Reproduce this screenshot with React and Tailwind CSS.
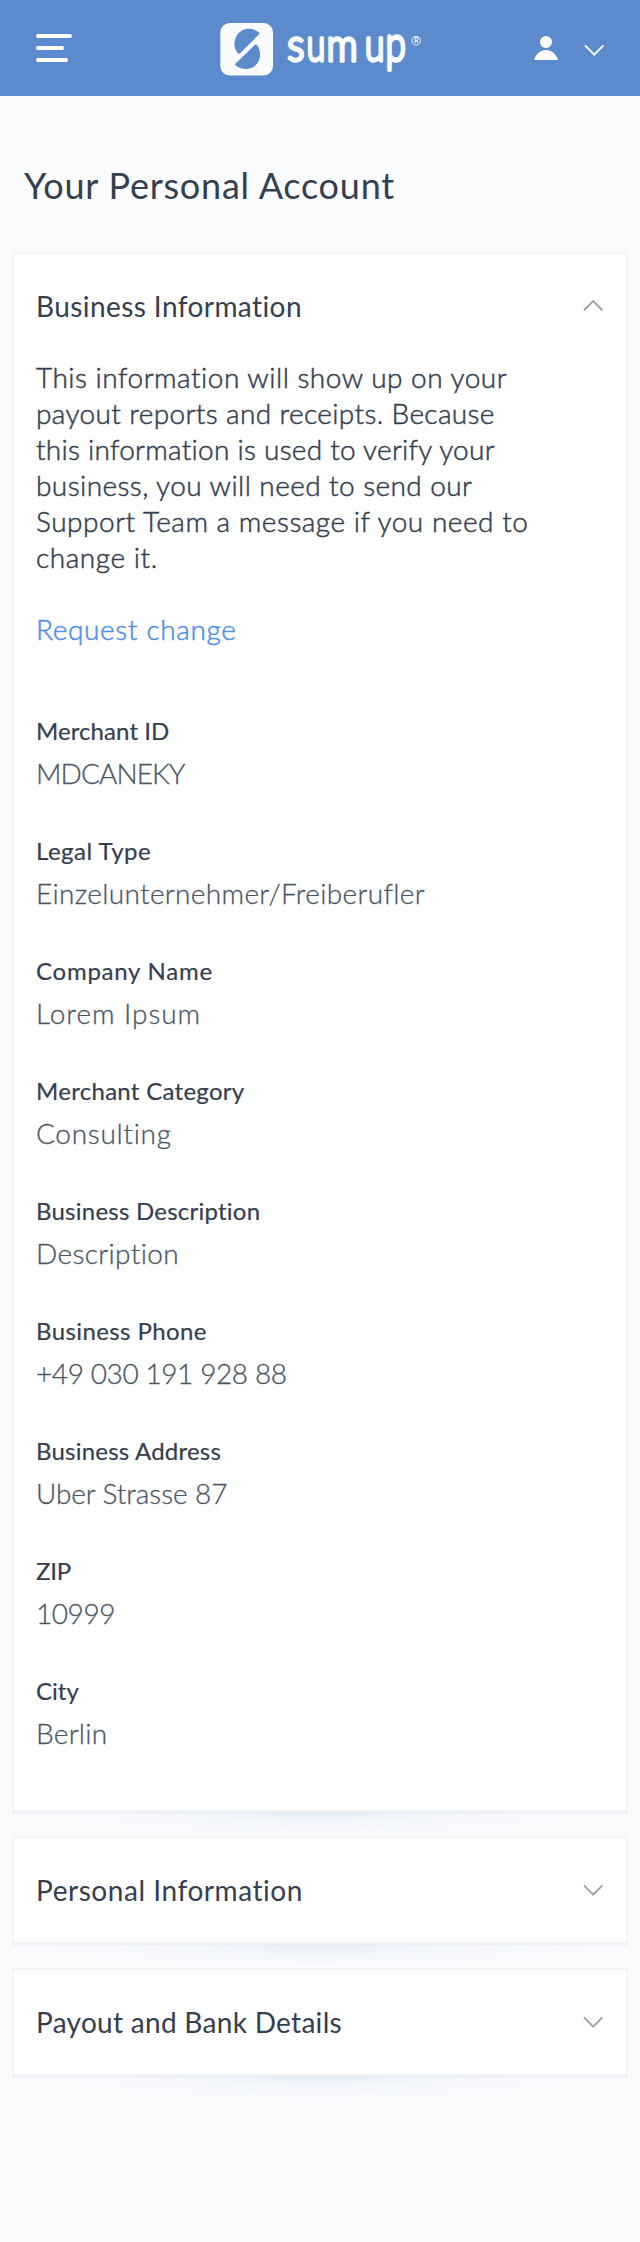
const paragraph = [
  ['This information will show up on your', 'tracking-[0.5px]'],
  ['payout reports and receipts. Because', 'tracking-[0.37px]'],
  ['this information is used to verify your', 'tracking-[0.26px]'],
  ['business, you will need to send our', 'tracking-[0.43px]'],
  ['Support Team a message if you need to', 'tracking-[0.52px]'],
  ['change it.', 'tracking-[0.55px]'],
];

const fields = [
  ['Merchant ID', 'tracking-[0.08px]', 'MDCANEKY', 'tracking-[-0.9px]'],
  ['Legal Type', 'tracking-[0.5px]', 'Einzelunternehmer/Freiberufler', 'tracking-[0.34px]'],
  ['Company Name', 'tracking-[0.75px]', 'Lorem Ipsum', 'tracking-[0.95px]'],
  ['Merchant Category', 'tracking-[0.29px]', 'Consulting', 'tracking-[0.7px]'],
  ['Business Description', 'tracking-[0.24px]', 'Description', 'tracking-[0.36px]'],
  ['Business Phone', 'tracking-[0.4px]', '+49 030 191 928 88', 'tracking-[-0.4px]'],
  ['Business Address', 'tracking-[0.22px]', 'Uber Strasse 87', 'tracking-[-0.08px]'],
  ['ZIP', 'tracking-[-0.2px]', '10999', 'tracking-[-0.44px]'],
  ['City', 'tracking-[0px]', 'Berlin', 'tracking-[0.28px]'],
];

function Chevron({ up = false, className }) {
  return (
    <svg width="22" height="14" viewBox="0 0 22 14" fill="none" stroke="currentColor" strokeWidth="2" className={className}>
      <path d={up ? 'M2 11.3 11.2 2.1l9.2 9.2' : 'M2 2.4 11.2 11.6l9.2-9.2'} />
    </svg>
  );
}

function Logo() {
  return (
    <svg width="204" height="88" viewBox="220 5.5 204 88" className="ml-[148px] overflow-visible">
      <rect x="220.3" y="24.5" width="52.7" height="52.6" rx="9.5" fill="#fafbfd" />
      <g transform="translate(0 1.5)" fill="#5b8bcc">
        <path d="M259.2 32.5C251 26.3 241 28.3 236.5 36C233 42 234.2 49.5 238 53.4Q239 54.2 240 53.3L259.1 34.3Q260 33.3 259.2 32.5Z" />
        <path d="M235.4 65.2C243.6 71.4 253.6 69.8 258.1 62.1C261.5 56 260.3 48.6 256.8 44.9Q255.8 43.9 254.8 44.9L235.6 63.5Q234.7 64.4 235.4 65.2Z" />
      </g>
      <g fill="#fafbfd" stroke="#fafbfd" strokeWidth="3.4" strokeLinejoin="round" strokeLinecap="round" fontFamily="Lato, sans-serif" fontSize="45" fontWeight="300">
        <text transform="translate(287.3 62) scale(.9 1)">s</text>
        <text transform="translate(306.6 62) scale(.76 1)">u</text>
        <text transform="translate(326.6 62) scale(.86 1)">m</text>
        <text transform="translate(364.8 62) scale(.8 1)">u</text>
        <text transform="translate(385.6 62) scale(.82 1.08)">p</text>
      </g>
      <circle cx="416.2" cy="42.2" r="4.3" fill="none" stroke="#fafbfd" strokeWidth="1" />
      <text x="416.3" y="44.7" textAnchor="middle" fill="#fafbfd" fontFamily="Lato, sans-serif" fontSize="7" fontWeight="700">R</text>
    </svg>
  );
}

function Card({ title, tracking, open = false, className, children }) {
  return (
    <section className="relative">
      <div className="absolute left-8 right-8 top-full h-6 bg-[radial-gradient(ellipse_50%_100%_at_50%_0%,#e8f0fa_0%,#f3f6fb_45%,#fafbfd00_100%)]" />
      <div className={`relative border-2 border-[#f1f3f6] bg-white px-[22px] pt-[34px] ${className}`}>
        <div className="absolute left-[-2px] right-[-2px] top-full mt-0.5 h-0.5 bg-[linear-gradient(90deg,#f1f3f6_10%,#e6edf6_50%,#f1f3f6_90%)]" />
        <div className="flex items-center justify-between">
          <h2 className={`text-[28px] leading-9 whitespace-nowrap ${tracking}`}>{title}</h2>
          <Chevron up={open} className="text-[#9ea2a9]" />
        </div>
        {children}
      </div>
    </section>
  );
}

export default function App() {
  return (
    <div className="h-[2242px] w-[640px] overflow-hidden bg-[#fafbfd] font-['Lato',sans-serif] text-[#344050]">
      <header className="flex h-24 items-center bg-[#5b8bcc] pl-9 pr-[35px] text-[#fafbfd]">
        <div className="flex w-9 flex-col gap-2">
          <div className="h-1 w-9 rounded-full bg-white" />
          <div className="h-1 w-7 rounded-full bg-white" />
          <div className="h-1 w-8 rounded-full bg-white" />
        </div>
        <Logo />
        <div className="ml-auto flex items-center gap-[25px]">
          <svg width="24" height="24" viewBox="0 0 24 24" fill="currentColor">
            <circle cx="12" cy="6" r="6" />
            <path d="M0 24C2 17.5 6.6 14 12 14s10 3.5 12 10Z" />
          </svg>
          <Chevron className="mt-1" />
        </div>
      </header>
      <h1 className="pl-6 pt-[65px] text-4xl leading-[48px] tracking-[0.78px]">Your Personal Account</h1>
      <main className="mt-[43px] flex flex-col gap-6 px-3">
        <Card title="Business Information" tracking="tracking-[0.42px]" open className="h-[1560px]">
          <p className="mt-[35px] text-[28px] font-light leading-9 [-webkit-text-stroke:0.5px_#344050]">
            {paragraph.map(([line, tracking]) => (
              <span key={line} className={`block whitespace-nowrap ${tracking}`}>{line}</span>
            ))}
          </p>
          <a className="mt-9 block text-[28px] font-light leading-9 tracking-[0.65px] text-[#4f90e8] [-webkit-text-stroke:0.5px_#4f90e8]">Request change</a>
          <dl className="mt-[66px] flex flex-col gap-[42px]">
            {fields.map(([label, labelTracking, value, valueTracking]) => (
              <div key={label} className="flex flex-col gap-1.5">
                <dt className={`text-2xl leading-9 [-webkit-text-stroke:0.2px_#344050] ${labelTracking}`}>{label}</dt>
                <dd className={`text-[28px] font-light leading-9 text-[#4b5665] [-webkit-text-stroke:0.3px_#4b5665] ${valueTracking}`}>{value}</dd>
              </div>
            ))}
          </dl>
        </Card>
        <Card title="Personal Information" tracking="tracking-[0.56px]" className="h-[108px]" />
        <Card title="Payout and Bank Details" tracking="tracking-[0.3px]" className="h-[108px]" />
      </main>
    </div>
  );
}
